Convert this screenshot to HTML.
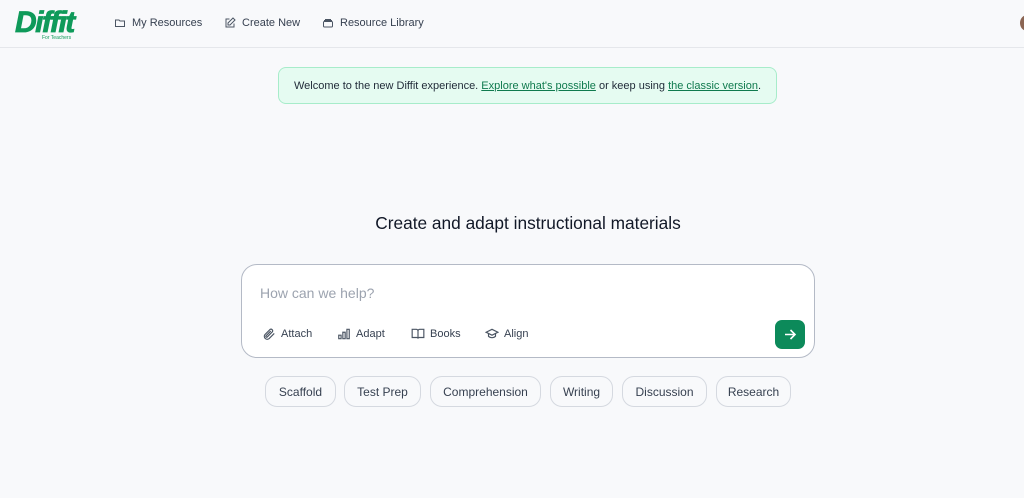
<!DOCTYPE html>
<html><head><meta charset="utf-8"><style>
*{box-sizing:border-box;margin:0;padding:0}
body{width:1024px;height:498px;background:#f8f9fb;font-family:"Liberation Sans",sans-serif;position:relative;overflow:hidden;color:#374151}
.hdr{position:absolute;left:0;top:0;width:1024px;height:48px;border-bottom:1px solid #e5e7eb;background:#f8f9fb}
.logo{position:absolute;left:15px;top:9px;font-weight:900;font-style:italic;font-size:30px;color:#0f9a5a;letter-spacing:-1.5px;line-height:28px;-webkit-text-stroke:0.8px #0f9a5a}
.logo small{position:absolute;left:27px;top:26px;font-size:5px;line-height:6px;font-style:normal;letter-spacing:0;font-weight:normal;white-space:nowrap;-webkit-text-stroke:0}
.nav{position:absolute;top:17px;font-size:11px;color:#374151;display:flex;align-items:center;gap:6px}
.nav svg{width:12px;height:12px}
.av{position:absolute;left:1020px;top:15px;width:14px;height:16px;border-radius:50%;background:#8b6553}
.ban{position:absolute;left:278px;top:67px;width:499px;height:37px;background:#e5fbf1;border:1px solid #a7ecca;border-radius:8px;font-size:11px;line-height:37px;text-align:center;color:#1f2937}
.ban a{color:#0f7a4e;text-decoration:underline}
h1{position:absolute;top:213px;text-align:center;font-weight:normal;font-size:17.3px;color:#111827}
.box{position:absolute;left:241px;top:264px;width:574px;height:94px;background:#fff;border:1px solid #b4bac6;border-radius:16px}
.ph{position:absolute;left:18px;top:20px;font-size:14px;color:#9ca3af}
.tl{position:absolute;top:62px;font-size:11px;color:#374151;display:flex;align-items:center;gap:5px}
.tl svg{width:14px;height:14px}
.go{position:absolute;left:533px;top:55px;width:30px;height:29px;background:#0c8a5a;border-radius:7px}
.chip{position:absolute;top:376px;height:31px;border:1px solid #d5d9e0;border-radius:12px;font-size:12px;line-height:30px;text-align:center;color:#374151;background:#f8f9fb}
</style></head><body>
<div class="hdr">
<div class="logo">Diffit<small>For Teachers</small></div>
<div class="nav" style="left:114px"><svg viewBox="0 0 24 24" fill="none" stroke="#4b5563" stroke-width="2"><path d="M3 6h7l2 2h9v11H3z"/></svg>My Resources</div>
<div class="nav" style="left:224px"><svg viewBox="0 0 24 24" fill="none" stroke="#4b5563" stroke-width="2"><path d="M11 4H4v16h16v-7M18 2l4 4-10 10H8v-4z"/></svg>Create New</div>
<div class="nav" style="left:322px"><svg viewBox="0 0 24 24" fill="none" stroke="#4b5563" stroke-width="2"><rect x="3" y="9" width="18" height="11" rx="2"/><path d="M6 5h12M5 9V7h14v2"/></svg>Resource Library</div>
<div class="av"></div>
</div>
<div class="ban">Welcome to the new Diffit experience. <a>Explore what's possible</a> or keep using <a>the classic version</a>.</div>
<h1 style="left:0;width:1056px">Create and adapt instructional materials</h1>
<div class="box">
<div class="ph">How can we help?</div>
<div class="tl" style="left:20px"><svg viewBox="0 0 24 24" fill="none" stroke="#4b5563" stroke-width="2"><path d="M21 11l-9 9a5 5 0 01-7-7l9-9a3 3 0 014 4l-9 9a1 1 0 01-2-2l8-8"/></svg>Attach</div>
<div class="tl" style="left:95px"><svg viewBox="0 0 24 24" fill="none" stroke="#4b5563" stroke-width="2"><path d="M3 20V14h4v6zM10 20V9h4v11zM17 20V4h4v16z"/></svg>Adapt</div>
<div class="tl" style="left:169px"><svg viewBox="0 0 24 24" fill="none" stroke="#4b5563" stroke-width="2"><path d="M2 4h7a3 3 0 013 3v13a2 2 0 00-2-2H2zM22 4h-7a3 3 0 00-3 3v13a2 2 0 012-2h8z"/></svg>Books</div>
<div class="tl" style="left:243px"><svg viewBox="0 0 24 24" fill="none" stroke="#4b5563" stroke-width="2"><path d="M2 9l10-5 10 5-10 5zM6 11v5c3 3 9 3 12 0v-5"/></svg>Align</div>
<div class="go"><svg viewBox="0 0 30 29" width="30" height="29" fill="none" stroke="#fff" stroke-width="1.6"><path d="M10 14.5h10M15.5 10l4.5 4.5-4.5 4.5"/></svg></div>
</div>
<div class="chip" style="left:265px;width:71px">Scaffold</div>
<div class="chip" style="left:344px;width:77px">Test Prep</div>
<div class="chip" style="left:430px;width:111px">Comprehension</div>
<div class="chip" style="left:550px;width:63px">Writing</div>
<div class="chip" style="left:622px;width:85px">Discussion</div>
<div class="chip" style="left:716px;width:75px">Research</div>
</body></html>
